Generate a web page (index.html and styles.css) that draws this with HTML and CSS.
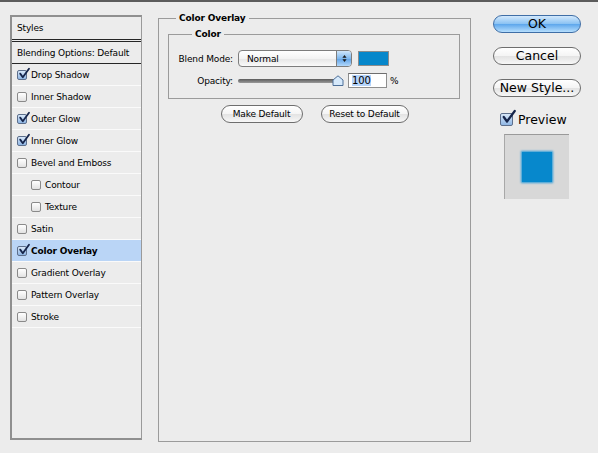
FILE: index.html
```html
<!DOCTYPE html>
<html>
<head>
<meta charset="utf-8">
<link rel="stylesheet" href="styles.css">
</head>
<body>
<div class="topbar"></div>
<div class="dialog">
  <div class="styles-panel">
    <div class="hdr styles-hdr">Styles</div>
    <div class="hdr blend-hdr">Blending Options: Default</div>
    <ul class="fx-list">
      <li><span class="cb on"><svg viewBox="0 0 12 12"><path d="M2.2 5.6 L4.8 9.2 L11 0.8"/></svg></span>Drop Shadow</li>
      <li><span class="cb"></span>Inner Shadow</li>
      <li><span class="cb on"><svg viewBox="0 0 12 12"><path d="M2.2 5.6 L4.8 9.2 L11 0.8"/></svg></span>Outer Glow</li>
      <li><span class="cb on"><svg viewBox="0 0 12 12"><path d="M2.2 5.6 L4.8 9.2 L11 0.8"/></svg></span>Inner Glow</li>
      <li><span class="cb"></span>Bevel and Emboss</li>
      <li class="sub"><span class="cb"></span>Contour</li>
      <li class="sub"><span class="cb"></span>Texture</li>
      <li><span class="cb"></span>Satin</li>
      <li class="sel"><span class="cb on"><svg viewBox="0 0 12 12"><path d="M2.2 5.6 L4.8 9.2 L11 0.8"/></svg></span>Color Overlay</li>
      <li><span class="cb"></span>Gradient Overlay</li>
      <li><span class="cb"></span>Pattern Overlay</li>
      <li><span class="cb"></span>Stroke</li>
    </ul>
  </div>

  <fieldset class="overlay">
    <legend>Color Overlay</legend>
    <fieldset class="color-group">
      <legend>Color</legend>
      <div class="form-grid">
        <label class="lbl">Blend Mode:</label>
        <div class="ctrl">
          <div class="popup"><span class="popup-val">Normal</span><span class="popup-arrows"><svg viewBox="0 0 10 14"><path d="M5 2 L8 6 L2 6 Z"/><path d="M5 12 L8 8 L2 8 Z"/></svg></span></div>
          <span class="swatch"></span>
        </div>
        <label class="lbl">Opacity:</label>
        <div class="ctrl">
          <div class="slider"><span class="track"></span><svg class="thumb" viewBox="0 0 12 11"><path d="M1 10.5 L1 5 L6 0.8 L11 5 L11 10.5 Z"/></svg></div>
          <span class="num"><span class="hl">100</span></span>
          <span class="pct">%</span>
        </div>
      </div>
    </fieldset>
    <div class="btn-row">
      <button class="pill small">Make Default</button>
      <button class="pill small">Reset to Default</button>
    </div>
  </fieldset>

  <div class="actions">
    <button class="pill big ok">OK</button>
    <button class="pill big">Cancel</button>
    <button class="pill big">New Style...</button>
    <div class="preview-check"><span class="cb big-cb on"><svg viewBox="0 0 12 12"><path d="M2.2 5.6 L4.8 9.2 L11 0.8"/></svg></span>Preview</div>
    <div class="preview-box"><span class="preview-swatch"></span></div>
  </div>
</div>
</body>
</html>
```

FILE: styles.css
```css
* { box-sizing: border-box; }
html, body { margin: 0; padding: 0; }
body {
  width: 598px;
  height: 453px;
  background: #ececec;
  font-family: "DejaVu Sans", Verdana, sans-serif;
  font-size: 9px;
  letter-spacing: -0.15px;
  color: #000;
  overflow: hidden;
}
.topbar {
  height: 2px;
  background: #5c5c5c;
}
.dialog {
  display: flex;
  align-items: flex-start;
  padding-left: 10px;
}

/* left styles panel */
.styles-panel {
  margin-top: 13px;
  width: 132px;
  height: 425px;
  border: 2px solid #8f8f8f;
  border-right-width: 1px;
  border-right-color: #9a9a9a;
  background: #ececec;
}
.hdr {
  display: flex;
  align-items: center;
  padding-left: 5px;
}
.styles-hdr {
  height: 25px;
  border-bottom: 3px double #262626;
}
.blend-hdr {
  height: 22px;
  border-bottom: 1px solid #262626;
}
.fx-list {
  list-style: none;
  margin: 0;
  padding: 0;
}
.fx-list li {
  height: 22px;
  display: flex;
  align-items: center;
  padding-left: 5px;
  border-bottom: 1px solid #fafafa;
}
.fx-list li.sub { padding-left: 19px; }
.fx-list li.sel {
  background: #bad5f6;
  font-weight: bold;
}
.cb {
  position: relative;
  width: 10px;
  height: 10px;
  margin-right: 4px;
  flex: none;
  border: 1px solid #8a8a8a;
  border-radius: 2px;
  background: linear-gradient(#ffffff, #e2e2e2);
}
.cb.on {
  border-color: #5d6f8c;
  background: linear-gradient(#d7e7f8, #8fb6e4);
}
.cb svg {
  position: absolute;
  left: 0;
  top: -3px;
  width: 12px;
  height: 12px;
  overflow: visible;
}
.cb svg path {
  fill: none;
  stroke: #15244a;
  stroke-width: 1.8;
  stroke-linecap: round;
  stroke-linejoin: round;
}

/* middle color overlay */
fieldset {
  margin: 0;
  min-width: 0;
}
legend {
  font-weight: bold;
  line-height: 12px;
  padding: 0 3px;
}
.overlay {
  margin-top: 10px;
  margin-left: 16px;
  width: 313px;
  height: 430px;
  border: 1px solid #9b9b9b;
  padding: 4px 11px 0 9px;
  display: flex;
  flex-direction: column;
}
.overlay > legend { margin-left: 8px; }
.color-group {
  border: 1px solid #9b9b9b;
  padding: 10px 0 10px 9px;
  width: 292px;
}
.color-group > legend { margin-left: 14px; }
.form-grid {
  display: grid;
  grid-template-columns: 55px auto;
  column-gap: 5px;
  row-gap: 6px;
  align-items: center;
}
.lbl {
  text-align: right;
}
.ctrl {
  display: flex;
  align-items: center;
}
.popup {
  width: 114px;
  height: 17px;
  border: 1px solid #7d7d7d;
  border-radius: 4px;
  background: linear-gradient(#ffffff, #f3f3f3 50%, #e6e6e6 52%, #fafafa);
  display: flex;
  align-items: center;
  overflow: hidden;
}
.popup-val {
  flex: 1;
  padding-left: 8px;
}
.popup-arrows {
  width: 15px;
  height: 100%;
  border-left: 1px solid #7d7d7d;
  background: linear-gradient(#cfe6fb, #7fb8ee 50%, #5fa2e6 52%, #b2d8fb);
  display: flex;
  align-items: center;
  justify-content: center;
}
.popup-arrows svg { width: 7px; height: 11px; }
.popup-arrows path { fill: #1a1a1a; }
.swatch {
  margin-left: 6px;
  width: 31px;
  height: 15px;
  background: #0687cb;
  border: 1px solid #8c8c8c;
}
.slider {
  position: relative;
  width: 106px;
  height: 15px;
  display: flex;
  align-items: center;
}
.track {
  width: 100px;
  height: 4px;
  border-radius: 2px;
  background: linear-gradient(#5b5b5b, #9a9a9a);
}
.thumb {
  position: absolute;
  left: 94px;
  top: 2px;
  width: 12px;
  height: 11px;
}
.thumb path {
  fill: #d6e9fb;
  stroke: #4d6f98;
  stroke-width: 1;
}
.num {
  margin-left: 4px;
  width: 39px;
  height: 15px;
  background: #fff;
  border: 1px solid #8e8e8e;
  border-top-color: #6e6e6e;
  display: flex;
  align-items: center;
  padding-left: 3px;
  font-size: 10px;
}
.hl { background: #b5d4fb; }
.pct { margin-left: 3px; }
.btn-row {
  display: flex;
  justify-content: center;
  gap: 18px;
  margin-top: 6px;
  padding-left: 2px;
}
.pill {
  font-family: "DejaVu Sans", Verdana, sans-serif;
  color: #000;
  border: 1px solid #6e6e6e;
  background: linear-gradient(#ffffff, #f4f4f4 50%, #e3e3e3 52%, #f7f7f7);
  padding: 0;
  margin: 0;
}
.pill.small {
  height: 18px;
  border-radius: 9px;
  font-size: 9px;
  letter-spacing: -0.15px;
}
.pill.small:first-child { width: 82px; }
.pill.small:last-child { width: 88px; }

/* right actions */
.actions {
  margin-left: 22px;
  margin-top: 13px;
  width: 88px;
  display: flex;
  flex-direction: column;
}
.pill.big {
  width: 88px;
  height: 18px;
  border-radius: 9px;
  font-size: 12.5px;
  letter-spacing: 0;
  line-height: 16px;
  margin-bottom: 14px;
}
.pill.ok {
  border-color: #3f6ea6;
  background: linear-gradient(#d2e8fc, #8cc3f3 48%, #5ea7ec 52%, #b6defd);
}
.preview-check {
  display: flex;
  align-items: center;
  margin-top: 1px;
  margin-left: 7px;
  font-size: 12.5px;
  letter-spacing: 0;
}
.cb.big-cb {
  width: 13px;
  height: 13px;
  margin-right: 5px;
}
.cb.big-cb svg {
  width: 15px;
  height: 15px;
  top: -4px;
}
.preview-box {
  margin-top: 7px;
  margin-left: 11px;
  width: 65px;
  height: 65px;
  background: #d8d8d8;
  border-top: 1px solid #9a9a9a;
  border-left: 1px solid #a8a8a8;
  display: flex;
  align-items: center;
  justify-content: center;
}
.preview-swatch {
  width: 30px;
  height: 30px;
  background: #0788cc;
  box-shadow: 0 0 2px 1px #2a9ad8;
}
```
